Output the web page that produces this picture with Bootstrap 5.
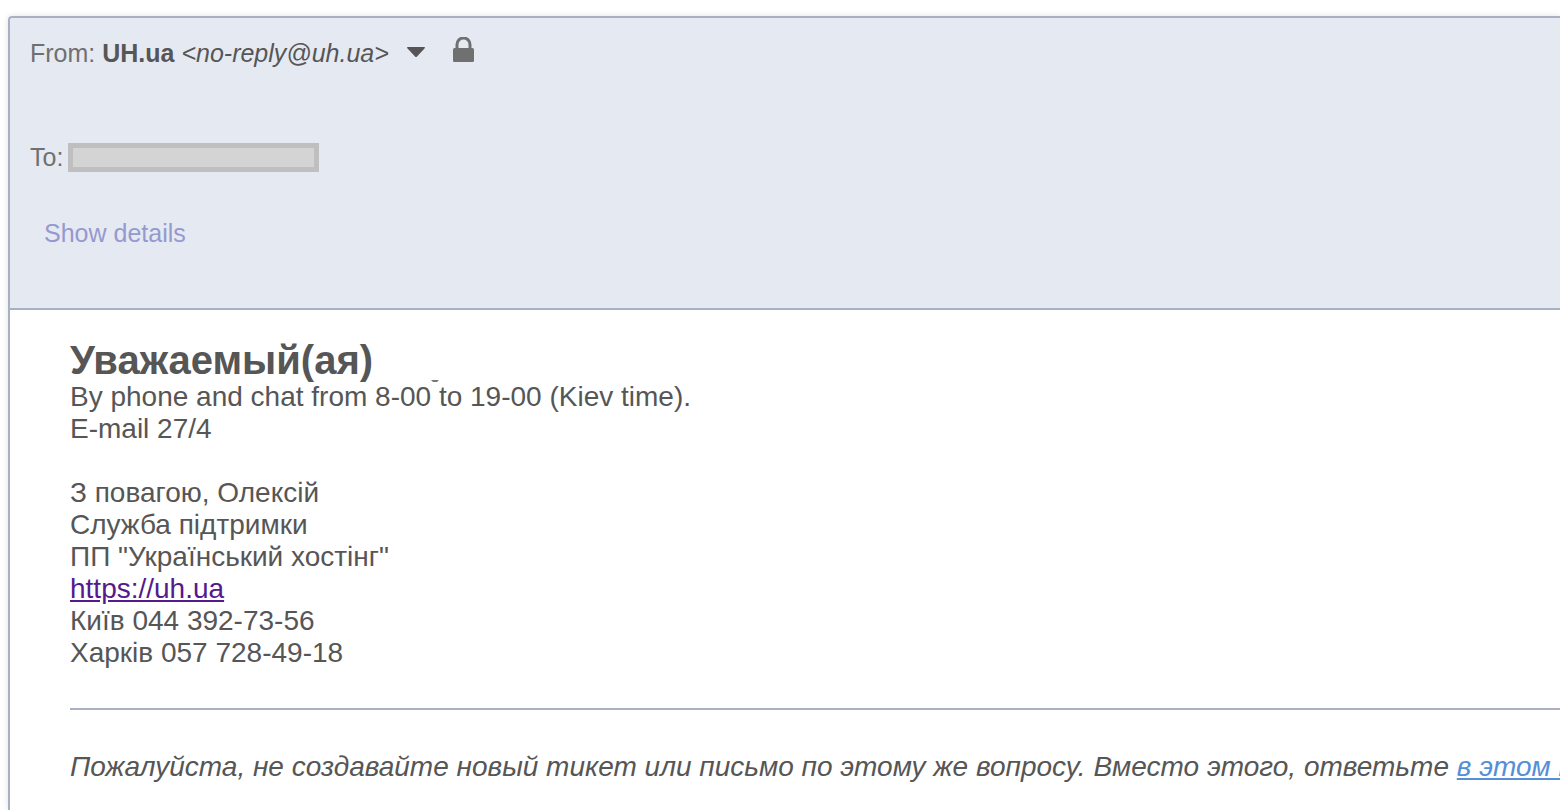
<!DOCTYPE html>
<html lang="en">
<head>
<meta charset="utf-8">
<meta name="viewport" content="width=device-width, initial-scale=1">
<title>Mail message</title>
<link href="https://cdn.jsdelivr.net/npm/bootstrap@5.3.0/dist/css/bootstrap.min.css" rel="stylesheet">
<style>
  body { font-family: "Liberation Sans", Arial, sans-serif; color: #565656; background: #fff; }
  .mail { border: 2px solid #a9b0c3; border-right: 0; border-bottom: 0; border-top-left-radius: 4px; margin: 16px 0 0 8px; box-shadow: 0 0 6px rgba(0, 0, 0, .12); }
  .mail-head { background: #e5e9f2; border-bottom: 2px solid #a9b0c3; border-top-left-radius: 2px; padding: 19px 20px 59px; font-size: 25px; line-height: 32px; }
  .caption { color: #707070; }
  .sender-menu { width: 18px; height: 30px; margin-left: 18px; }
  .lock { margin-left: 28px; margin-bottom: 6px; }
  .row-to { margin-top: 72px; }
  .recipient { width: 251px; height: 29px; background: #d4d4d4; border: 5px solid #bfbfbf; margin-left: 5px; }
  .row-details { margin: 44px 0 0 14px; }
  .row-details a { color: #9599cf; }
  .mail-body { padding: 29px 0 28px 60px; font-size: 28px; line-height: 32px; }
  .mail-body h1 { font-size: 40px; line-height: 42px; }
  .visited { color: #551a8b; }
  .reply { color: #558fd5; }
  .rule { border-top: 2px solid #a9b0c3; opacity: 1; margin: 39px 0 41px; }
  .tail { left: 361px; top: -1px; }
</style>
</head>
<body class="vh-100 overflow-hidden d-flex flex-column">
<main class="mail flex-grow-1 text-nowrap overflow-hidden">
  <header class="mail-head">
    <div class="d-flex align-items-center">
      <span class="caption">From:&nbsp;</span><strong>UH.ua</strong><em>&nbsp;&lt;no-reply@uh.ua&gt;</em>
      <button type="button" class="sender-menu btn p-0 border-0 d-flex align-items-center" aria-label="Sender options">
        <svg width="18" height="12" viewBox="0 0 18 12" aria-hidden="true"><path d="M.5 0h17q.8.6 0 1.5L10 9.5q-1 1-2 0L.5 1.500Q-.3.6.5 0Z" fill="#555"/></svg>
      </button>
      <svg class="lock" width="21" height="26" viewBox="0 0 21 26" role="img" aria-label="Secure"><path d="M4 12V7.500a6.500 6.500 0 0 1 13 0V12" fill="none" stroke="#707070" stroke-width="3"/><rect y="11" width="21" height="14" rx="1.500" fill="#707070"/></svg>
    </div>
    <div class="row-to d-flex align-items-center"><span class="caption">To:</span><span class="recipient"></span></div>
    <div class="row-details"><a href="#" class="text-decoration-none">Show details</a></div>
  </header>
  <article class="mail-body">
    <h1 class="fw-bold mb-0">Уважаемый(ая)</h1>
    <div class="position-relative">By phone and chat from 8-00 to 19-00 (Kiev time).<svg class="tail position-absolute" width="8" height="2" aria-hidden="true"><path d="M0 0h8L6 2H2Z" fill="#777"/></svg></div>
    <div>E-mail 27/4</div>
    <br>
    <div>З повагою, Олексій</div>
    <div>Служба підтримки</div>
    <div>ПП "Український хостінг"</div>
    <div><a href="https://uh.ua" class="visited">https://uh.ua</a></div>
    <div>Київ 044 392-73-56</div>
    <div>Харків 057 728-49-18</div>
    <hr class="rule">
    <p class="mb-0"><em>Пожалуйста, не создавайте новый тикет или письмо по этому же вопросу. Вместо этого, ответьте <a href="#" class="reply">в этом письме</a></em></p>
  </article>
</main>
<script src="https://cdn.jsdelivr.net/npm/bootstrap@5.3.0/dist/js/bootstrap.bundle.min.js"></script>
</body>
</html>
